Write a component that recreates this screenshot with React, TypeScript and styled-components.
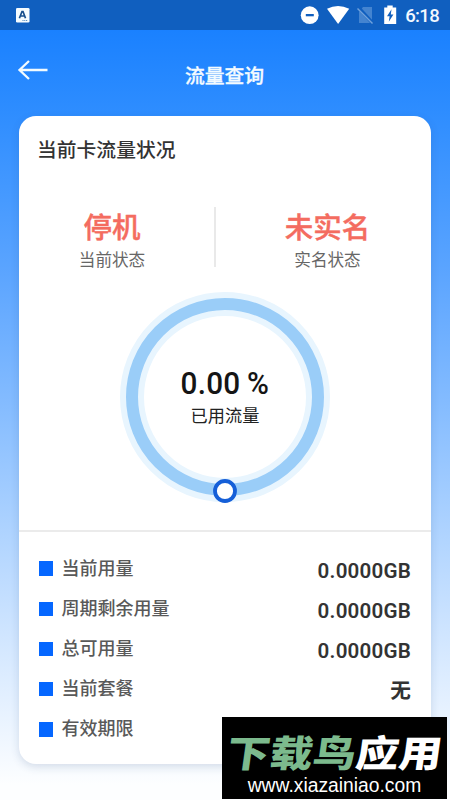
import React from "react";
import styled, { createGlobalStyle } from "styled-components";

const GlobalStyle = createGlobalStyle`
  * { box-sizing: border-box; }
  html, body { margin: 0; padding: 0; }
  body { font-family: Roboto, "Noto Sans CJK SC", sans-serif; overflow: hidden; }
`;

const Screen = styled.div`
  position: relative;
  width: 450px;
  height: 800px;
  overflow: hidden;
  display: flex;
  flex-direction: column;
  background: linear-gradient(180deg, #1a81ff 30px, #2e8dff 112px, #5ca5ff 275px, #83bbff 400px, #aed3ff 530px, #d3e7ff 645px, #fdfeff 785px);
`;

const StatusBar = styled.div`
  height: 30px;
  flex: none;
  background: #105fbf;
  display: flex;
  justify-content: space-between;
`;

const Header = styled.header`
  height: 86px;
  flex: none;
  display: grid;
  grid-template-columns: 100px 1fr 101px;
`;

const BackButton = styled.button`
  width: 66px;
  height: 80px;
  border: 0;
  padding: 0;
  background: none;
`;

const HeaderTitle = styled.h1`
  margin: 0;
  padding-top: 32px;
  font-size: 19.8px;
  line-height: 29px;
  font-weight: 500;
  color: #f4fbff;
  text-align: center;
  -webkit-text-stroke: 0.3px #f4fbff;
`;

const Card = styled.main`
  margin: 0 19px;
  height: 648px;
  flex: none;
  border-radius: 17px;
  background: #fff;
  box-shadow: 0 3px 8px rgba(40, 70, 120, 0.16);
`;

const CardTitle = styled.h2`
  margin: 0;
  padding: 20px 0 0 18px;
  height: 91px;
  font-size: 19.8px;
  line-height: 29px;
  font-weight: 500;
  color: #333;
`;

const StateRow = styled.section`
  display: grid;
  grid-template-columns: 197px 1fr;
  height: 60px;
`;

const StateItem = styled.div<{ $divided?: boolean }>`
  display: flex;
  flex-direction: column;
  align-items: center;
  height: 60px;
  border-right: ${(p) => (p.$divided ? "2px solid #e9e9e9" : "0")};
  padding-left: ${(p) => (p.$divided ? "0" : "8px")};
  padding-right: ${(p) => (p.$divided ? "9px" : "0")};
`;

const StateValue = styled.strong`
  padding-top: 3px;
  height: 39px;
  font-size: 28.5px;
  line-height: 38px;
  font-weight: 500;
  color: #f46c60;
  -webkit-text-stroke: 0.4px #f46c60;
`;

const StateLabel = styled.span`
  font-size: 16.6px;
  line-height: 29px;
  height: 21px;
  color: #666;
`;

const Gauge = styled.section`
  display: grid;
  height: 263px;
  justify-content: center;
  padding-top: 24px;

  & > * { grid-area: 1 / 1; }
`;

const GaugeText = styled.div`
  display: flex;
  flex-direction: column;
  align-items: center;
  padding-top: 74px;
`;

const Percent = styled.span`
  font-size: 30.8px;
  line-height: 38px;
  font-weight: 500;
  letter-spacing: 0.2px;
  word-spacing: -1px;
  color: #151515;
  transform: scaleX(0.965);
`;

const GaugeLabel = styled.span`
  font-size: 17.2px;
  line-height: 26px;
  color: #222;
`;

const UsageList = styled.ul`
  margin: 0;
  padding: 17px 20px 0 19.5px;
  list-style: none;
  border-top: 2px solid #ebebeb;
`;

const UsageRow = styled.li`
  height: 40.2px;
  display: flex;
  align-items: center;
`;

const Marker = styled.span`
  width: 14.5px;
  height: 14.5px;
  margin-top: -1px;
  background: #0567ff;
`;

const UsageLabel = styled.span`
  margin-left: 8.5px;
  padding-bottom: 1px;
  font-size: 18px;
  line-height: 26px;
  font-weight: 500;
  color: #595959;
`;

const UsageValue = styled.span`
  margin-left: auto;
  padding-top: 3px;
  font-size: 20.6px;
  line-height: 26px;
  font-weight: 600;
  letter-spacing: 0.2px;
  color: #333;
`;

const Watermark = styled.aside`
  position: absolute;
  left: 222px;
  top: 717px;
  width: 225px;
  height: 82px;
  background: #000;
  display: flex;
  flex-direction: column;
  align-items: center;
  white-space: nowrap;
`;

const Brand = styled.div`
  height: 57px;
  padding-top: 14px;
  font-family: "Noto Sans CJK SC", sans-serif;
  font-size: 43px;
  line-height: 42px;
  font-weight: 900;
  transform: translateX(1.5px) skewX(-8deg) scaleY(0.86);
  color: #fff;
`;

const BrandAccent = styled.span`
  color: #7cba8d;
`;

const Site = styled.div`
  font-family: "Liberation Sans", sans-serif;
  font-size: 19.3px;
  line-height: 26px;
  color: #fff;
`;

const rows = [
  ["当前用量", "0.0000GB"],
  ["周期剩余用量", "0.0000GB"],
  ["总可用量", "0.0000GB"],
  ["当前套餐", "无"],
  ["有效期限", ""],
];

function StatusIcons() {
  return (
    <svg width="160" height="30" viewBox="290 0 160 30">
      <circle cx="309.7" cy="15.2" r="8.9" fill="#fff" />
      <rect x="305.8" y="14" width="8" height="2.3" fill="#105fbf" />
      <path d="M327 8.8Q338 3 349.2 8.8L338.1 24Z" fill="#fff" />
      <path d="M363 7H372V23H359V12Z" fill="#4484d0" />
      <path d="M358 7L373 23.5" stroke="#105fbf" strokeWidth="3.4" />
      <path d="M357.5 8.5L372.5 23.5" stroke="#70a1dc" strokeWidth="1.4" />
      <path d="M387.3 5.4H392.7V7.4H396.2V24H384.2V7.4H387.3Z" fill="#fff" />
      <path d="M391.5 9.3L387 16.3H389.6L388.8 21.7L393.4 14.4H390.8Z" fill="#105fbf" />
      <text x="405.2" y="22" fill="#f2f8ff" fontFamily="Roboto, sans-serif" fontSize="18.5" fontWeight="500" textLength="34.5">6:18</text>
    </svg>
  );
}

function KeyboardIcon() {
  return (
    <svg width="40" height="30">
      <rect x="16" y="8" width="13.5" height="14.5" rx="1.3" fill="#f5fcff" />
      <path d="M19.4 18.3L22 11.5H23L25.5 18.3M20.3 16H24.6" fill="none" stroke="#174f8d" strokeWidth="1.7" />
      <path d="M22.5 20.5H28" stroke="#4d86bc" strokeWidth="1" strokeDasharray="1 .8" />
    </svg>
  );
}

function Ring() {
  return (
    <svg width="212" height="212" viewBox="-106 -106 212 212">
      <circle r="93" fill="none" stroke="#e8f5fe" strokeWidth="24" />
      <circle r="93" fill="none" stroke="#9acdf8" strokeWidth="12" />
      <circle cy="94" r="10" fill="#fff" stroke="#155fd8" strokeWidth="3.8" />
    </svg>
  );
}

export default function App() {
  return (
    <>
      <GlobalStyle />
      <Screen>
        <StatusBar>
          <KeyboardIcon />
          <StatusIcons />
        </StatusBar>
        <Header>
          <BackButton aria-label="返回">
            <svg width="66" height="80" viewBox="0 30 66 80">
              <path d="M47.5 70H19.5M29 61L19.5 70L29 79" fill="none" stroke="#f2fbff" strokeWidth="2.3" />
            </svg>
          </BackButton>
          <HeaderTitle>流量查询</HeaderTitle>
        </Header>
        <Card>
          <CardTitle>当前卡流量状况</CardTitle>
          <StateRow>
            <StateItem $divided>
              <StateValue>停机</StateValue>
              <StateLabel>当前状态</StateLabel>
            </StateItem>
            <StateItem>
              <StateValue>未实名</StateValue>
              <StateLabel>实名状态</StateLabel>
            </StateItem>
          </StateRow>
          <Gauge>
            <Ring />
            <GaugeText>
              <Percent>0.00 %</Percent>
              <GaugeLabel>已用流量</GaugeLabel>
            </GaugeText>
          </Gauge>
          <UsageList>
            {rows.map(([label, value]) => (
              <UsageRow key={label}>
                <Marker />
                <UsageLabel>{label}</UsageLabel>
                <UsageValue>{value}</UsageValue>
              </UsageRow>
            ))}
          </UsageList>
        </Card>
        <Watermark>
          <Brand>
            <BrandAccent>下载鸟</BrandAccent>应用
          </Brand>
          <Site>www.xiazainiao.com</Site>
        </Watermark>
      </Screen>
    </>
  );
}
